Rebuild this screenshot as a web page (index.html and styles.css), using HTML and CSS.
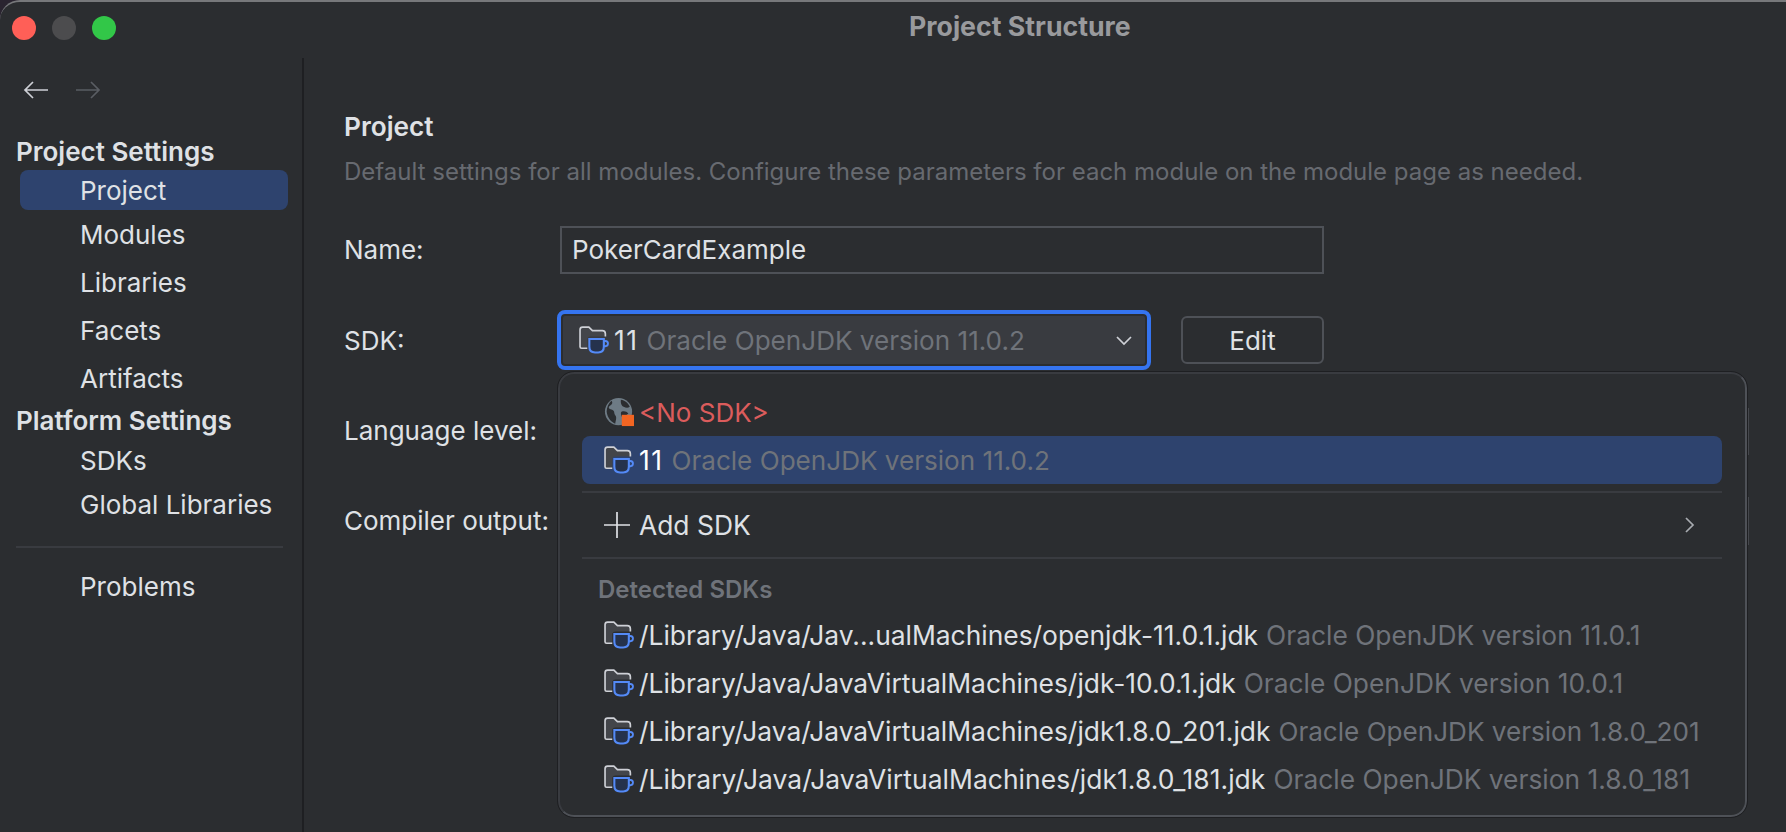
FILE: index.html
```html
<!DOCTYPE html>
<html lang="en">
<head>
<meta charset="utf-8">
<title>Project Structure</title>
<link rel="stylesheet" href="styles.css">
</head>
<body>
<svg class="defs" width="0" height="0" aria-hidden="true">
  <defs>
    <symbol id="jdk" viewBox="1 2 29 27">
      <path d="M2 22V5.500C2 4 3 3 4.500 3H10.500L14 6.500H23.500C25.500 6.500 26.500 7.500 26.500 9.500V12H12.500C10 12 9 13 9 15V23.500H3.500C2.500 23.500 2 23 2 22Z" fill="#43454a"/>
      <path d="M9 23.500H3.500C2.500 23.500 2 23 2 22V5.500C2 4 3 3 4.500 3H10.500L14 6.500H23.500C25.500 6.500 26.500 7.500 26.500 9.500V12" fill="none" stroke="#ced0d6" stroke-width="1.600"/>
      <path d="M11 14.500H25V22C25 25.500 23 27.500 19.500 27.500H16.500C13 27.500 11 25.500 11 22Z" fill="#25324d" stroke="#548af7" stroke-width="2"/>
      <path d="M25 16.500H26.500C28 16.500 29 17.500 29 19C29 20.500 28 21.500 26.500 21.500H24.500" fill="none" stroke="#548af7" stroke-width="1.800"/>
    </symbol>
  </defs>
</svg>
<div class="window">
  <header class="titlebar">
    <div class="lights">
      <span class="light red"></span>
      <span class="light grey"></span>
      <span class="light green"></span>
    </div>
    <div class="title">Project Structure</div>
  </header>
  <div class="body">
    <aside class="sidebar">
      <div class="nav-arrows">
        <svg width="26" height="20" viewBox="0 0 26 20"><path d="M25 10H2M10 2L2 10L10 18" fill="none" stroke="#ced0d6" stroke-width="1.700"/></svg>
        <svg width="26" height="20" viewBox="0 0 26 20"><path d="M1 10H24M16 2L24 10L16 18" fill="none" stroke="#5a5d63" stroke-width="1.700"/></svg>
      </div>
      <div class="side-head first">Project Settings</div>
      <div class="side-item selected">Project</div>
      <div class="side-item h48">Modules</div>
      <div class="side-item h48">Libraries</div>
      <div class="side-item h48">Facets</div>
      <div class="side-item h48">Artifacts</div>
      <div class="side-head second">Platform Settings</div>
      <div class="side-item h44">SDKs</div>
      <div class="side-item h44">Global Libraries</div>
      <div class="side-rule"></div>
      <div class="side-item h44">Problems</div>
    </aside>
    <main class="main">
      <h1 class="heading">Project</h1>
      <p class="desc">Default settings for all modules. Configure these parameters for each module on the module page as needed.</p>
      <div class="form-row name-row">
        <label class="label">Name:</label>
        <div class="input">PokerCardExample</div>
      </div>
      <div class="form-row sdk-row">
        <label class="label">SDK:</label>
        <div class="combo">
          <svg class="ic"><use href="#jdk"/></svg>
          <span class="pri num">11</span><span class="sec tight">Oracle OpenJDK version 11.0.2</span>
          <svg class="chev" width="18" height="12" viewBox="0 0 18 12"><path d="M2 2L9 9L16 2" fill="none" stroke="#ced0d6" stroke-width="1.700"/></svg>
        </div>
        <div class="btn">Edit</div>
      </div>
      <div class="form-row lang-row"><label class="label">Language level:</label></div>
      <div class="form-row comp-row"><label class="label">Compiler output:</label></div>

      <div class="under under-a"></div>
      <div class="under under-b"></div>

      <div class="popup">
        <div class="row nosdk">
          <svg class="ic" viewBox="0 0 32 30">
            <circle cx="15.500" cy="14.500" r="14.500" fill="#6e7b85"/>
            <path d="M8 3C10 5.500 8 7.500 6 8.500C4.500 9.500 5 11.500 7 12C9.500 12.500 11 13.500 11 16C11 18 13 18.500 13 21C13 23.500 12 25.500 12 27.500C8 26 3.500 21.500 2.800 14.500C3 9.500 5 5.500 8 3ZM18 2C22 2.500 26 5.500 27.500 9.500C25.500 11 23 10.500 21 9.500C19 8.500 17.500 6.500 18 2ZM19 14.500C22 13.500 24 14.500 26 16.500L20 21.500C18.500 19.500 17 15.500 19 14.500Z" fill="#2b2d30"/>
            <rect x="19" y="18" width="13" height="12" fill="#f26522"/>
          </svg>
          <span class="red-text">&lt;No SDK&gt;</span>
        </div>
        <div class="row current">
          <svg class="ic"><use href="#jdk"/></svg>
          <span class="pri num on-sel">11</span><span class="sec tight">Oracle OpenJDK version 11.0.2</span>
        </div>
        <div class="pop-rule rule-a"></div>
        <div class="row add">
          <svg class="ic" viewBox="0 0 30 30"><path d="M13 2V28M0 15H26" fill="none" stroke="#dfe1e5" stroke-width="1.700"/></svg>
          <span class="pri">Add SDK</span>
          <svg class="chev-r" width="12" height="18" viewBox="0 0 12 18"><path d="M2 2L9 9L2 16" fill="none" stroke="#a8abb0" stroke-width="1.700"/></svg>
        </div>
        <div class="pop-rule rule-b"></div>
        <div class="pop-head">Detected SDKs</div>
        <div class="row"><svg class="ic"><use href="#jdk"/></svg><span class="pri">/Library/Java/Jav...ualMachines/openjdk-11.0.1.jdk</span><span class="sec">Oracle OpenJDK version 11.0.1</span></div>
        <div class="row"><svg class="ic"><use href="#jdk"/></svg><span class="pri">/Library/Java/JavaVirtualMachines/jdk-10.0.1.jdk</span><span class="sec">Oracle OpenJDK version 10.0.1</span></div>
        <div class="row"><svg class="ic"><use href="#jdk"/></svg><span class="pri">/Library/Java/JavaVirtualMachines/jdk1.8.0_201.jdk</span><span class="sec tight">Oracle OpenJDK version 1.8.0_201</span></div>
        <div class="row"><svg class="ic"><use href="#jdk"/></svg><span class="pri wide">/Library/Java/JavaVirtualMachines/jdk1.8.0_181.jdk</span><span class="sec">Oracle OpenJDK version 1.8.0_181</span></div>
      </div>
    </main>
  </div>
</div>
</body>
</html>
```
FILE: styles.css
```css
* { box-sizing: border-box; }
html, body { margin: 0; height: 100%; }
body {
  background: #2a2430;
  font-family: Inter, "Noto Sans", sans-serif;
  font-size: 26px;
  color: #dfe1e5;
  overflow: hidden;
}
.defs { position: absolute; }
.window {
  width: 1786px;
  height: 832px;
  background: #2b2d30;
  border-top: 2px solid #77787b;
  border-top-left-radius: 20px;
  display: flex;
  flex-direction: column;
}
.titlebar {
  height: 56px;
  flex: none;
  display: flex;
  align-items: center;
  position: relative;
}
.lights { display: flex; gap: 16px; padding-left: 12px; margin-top: -4px; }
.light { width: 24px; height: 24px; border-radius: 50%; }
.red { background: #ff5f57; }
.grey { background: #4c4c4e; }
.green { background: #32c748; }
.title {
  position: absolute;
  left: 909px;
  top: 10px;
  font-size: 26.700px;
  font-weight: 700;
  color: #999a9d;
  line-height: 28px;
}
.body { flex: 1; display: flex; min-height: 0; }
.sidebar {
  width: 304px;
  flex: none;
  border-right: 2px solid #1e1f22;
  padding-left: 16px;
}
.nav-arrows { display: flex; gap: 26px; padding: 22px 0 0 7px; height: 72px; align-items: flex-start; }
.side-head { font-weight: 600; color: #dfe1e5; line-height: 28px; }
.first { margin-top: 8px; }
.second { margin-top: 5px; margin-bottom: 3px; }
.side-item { padding-left: 64px; color: #dfe1e5; }
.selected { margin: 4px 14px 0 4px; height: 40px; line-height: 42px; padding-left: 60px; background: #2e436e; border-radius: 8px; }
.h48 { height: 48px; line-height: 50px; }
.h44 { height: 44px; line-height: 46px; }
.side-rule { height: 2px; margin: 20px 19px 16px 0; background: #393b40; }
.main { flex: 1; position: relative; padding-left: 40px; }
.heading { margin: 0; padding-top: 55px; font-size: 26.200px; font-weight: 600; line-height: 28px; color: #dfe1e5; }
.desc { margin: 17px 0 0; line-height: 28px; color: #676a70; white-space: nowrap; font-size: 24px; }
.form-row { display: flex; align-items: center; }
.label { width: 213px; flex: none; color: #dfe1e5; line-height: 28px; }
.name-row { margin-top: 40px; }
.input {
  width: 764px;
  height: 48px;
  margin-left: 3px;
  border: 2px solid #4e5157;
  padding-left: 10px;
  line-height: 44px;
}
.sdk-row { margin-top: 36px; height: 60px; }
.sdk-row .label { padding-top: 2px; }
.combo {
  width: 594px;
  height: 60px;
  border: 4px solid #3574f0;
  border-radius: 8px;
  background: #393b40;
  box-shadow: inset 0 0 0 2px #2b2d30;
  display: flex;
  align-items: center;
  padding-left: 18px;
  position: relative;
}
.ic { width: 30px; height: 30px; flex: none; }
.pri { margin-left: 5px; color: #dfe1e5; white-space: nowrap; font-size: 26.400px; }
.num { letter-spacing: 1.500px; }
.wide { letter-spacing: 0.070px; }
.sec { margin-left: 8px; color: #6f737a; white-space: nowrap; font-size: 26.350px; }
.tight { font-size: 26.100px; }
.chev { position: absolute; right: 14px; top: 21px; }
.btn {
  width: 143px;
  height: 48px;
  margin-left: 30px;
  border: 2px solid #4e5157;
  border-radius: 6px;
  text-align: center;
  line-height: 46px;
}
.lang-row { margin-top: 47px; height: 28px; }
.comp-row { margin-top: 62px; height: 28px; }
.under { position: absolute; left: 1443px; width: 2px; background: #45474c; }
.under-a { top: 350px; height: 47px; }
.under-b { top: 439px; height: 48px; }
.popup {
  position: absolute;
  left: 254px;
  top: 314px;
  width: 1189px;
  height: 445px;
  background: #2b2d30;
  border: 2px solid #4e5157;
  border-top-color: #393b40;
  border-left-color: #393b40;
  outline: 1px solid #1e1f22;
  border-radius: 16px;
  padding: 14px 23px 0 22px;
}
.row { height: 48px; display: flex; align-items: center; padding-left: 22px; white-space: nowrap; position: relative; }
.red-text { margin-left: 5px; color: #db5c5c; }
.current { height: 48px; background: #2e436e; border-radius: 8px; }
.nosdk { height: 48px; }
.on-sel { color: #fff; }
.pop-rule { height: 2px; background: #393b40; }
.rule-a { margin-top: 7px; }
.add { height: 64px; }
.chev-r { position: absolute; right: 26px; top: 23px; }
.pop-head { padding-left: 16px; margin-top: 17px; margin-bottom: 7px; line-height: 28px; font-size: 24px; font-weight: 600; color: #6f737a; }
```
